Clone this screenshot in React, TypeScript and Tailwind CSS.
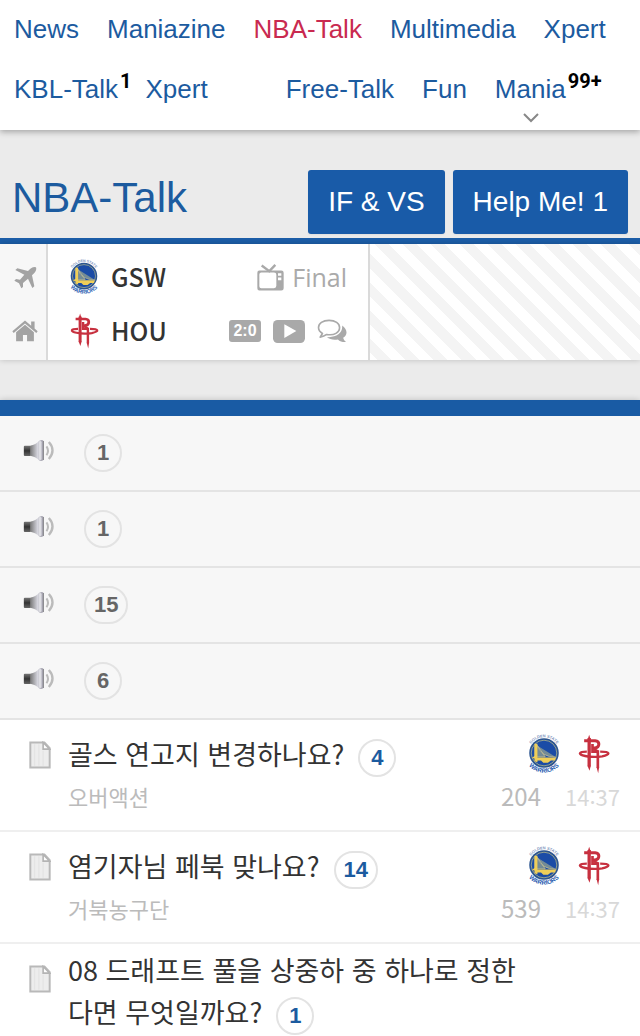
import type { ReactNode } from "react";

interface NavItem {
  label: string;
  active?: boolean;
  count?: string;
  className?: string;
}

interface Post {
  title: string;
  comments: number;
  author?: string;
  views?: number;
  time?: string;
}

const topNav: NavItem[] = [
  { label: "News" },
  { label: "Maniazine" },
  { label: "NBA-Talk", active: true },
  { label: "Multimedia" },
  { label: "Xpert" },
];

const subNav: NavItem[] = [
  { label: "KBL-Talk", count: "1", className: "mr-3.5" },
  { label: "Xpert", className: "mr-[78px]" },
  { label: "Free-Talk", className: "mr-7" },
  { label: "Fun", className: "mr-7" },
  { label: "Mania", count: "99+" },
];

const notices = [1, 1, 15, 6];

const posts: Post[] = [
  { title: "골스 연고지 변경하나요?", comments: 4, author: "오버액션", views: 204, time: "14:37" },
  { title: "염기자님 페북 맞나요?", comments: 14, author: "거북농구단", views: 539, time: "14:37" },
  { title: "08 드래프트 풀을 상중하 중 하나로 정한다면 무엇일까요?", comments: 1 },
];

const PlaneIcon = () => (
  <svg viewBox="42 90 69 69" className="h-[23px] w-[23px] fill-[#a3a3a3]" aria-hidden="true">
    <path d="M108 94Q100 90 91 98L84 105L52 97L46 102L73 116L60 131L48 129L43 134L57 142L64 157L69 153L69 141L84 128L97 156L103 151L96 118L103 111Q111 102 108 94Z" />
  </svg>
);

const HomeIcon = () => (
  <svg viewBox="37 259 76 64" className="h-[22px] w-[26px] fill-[#a3a3a3]" aria-hidden="true">
    <path d="M75 260L38 292L42 297L75 269L108 297L112 292L103 284V263H93V276Z" />
    <path d="M75 273L49 295V321H69V303H81V321H101V295Z" />
  </svg>
);

const TvIcon = () => (
  <svg viewBox="167 86 81 80" className="h-[27px] w-[27px] fill-[#a9a9a9]" aria-hidden="true">
    <path
      fillRule="evenodd"
      d="M174 105H240Q247 105 247 112V158Q247 165 240 165H174Q168 165 168 158V112Q168 105 174 105ZM180 111Q174 111 174 117V152Q174 158 180 158H218Q225 158 225 151V118Q225 111 218 111ZM230 113V121H240V113ZM230 126V134H240V126Z"
    />
    <path d="M181 90L204 107L222 88" fill="none" stroke="#a9a9a9" strokeWidth="7" />
  </svg>
);

const PlayIcon = () => (
  <svg viewBox="222 258 96 69" className="h-[23px] w-8" aria-hidden="true">
    <rect x="222" y="258" width="96" height="69" rx="14" fill="#a9a9a9" />
    <path d="M256 271V312L292 291Z" fill="#fff" />
  </svg>
);

const ChatIcon = () => (
  <svg viewBox="352 250 90 73" className="h-6 w-[30px]" aria-hidden="true">
    <path
      d="M388 254C369 254 356 263 356 276C356 284 361 290 368 294L361 305C369 304 376 301 381 297C404 301 420 291 420 276C420 263 407 254 388 254Z"
      fill="none"
      stroke="#a9a9a9"
      strokeWidth="5"
      strokeLinejoin="round"
    />
    <path
      d="M428 270C446 283 444 300 431 307C432 313 436 317 440 320C430 321 421 318 415 312C403 315 389 312 382 305C409 307 430 294 428 270Z"
      fill="#a9a9a9"
    />
  </svg>
);

const SpeakerIcon = () => (
  <svg viewBox="70 148 98 72" className="mb-1 h-6 w-[33px] shrink-0" aria-hidden="true">
    <defs>
      <linearGradient id="horn" x1="0" x2="1" y1="0" y2="0">
        <stop offset="0" stopColor="#777" />
        <stop offset="0.55" stopColor="#d4d4dc" />
        <stop offset="1" stopColor="#9a98a5" />
      </linearGradient>
      <linearGradient id="magnet" x1="0" x2="0" y1="0" y2="1">
        <stop offset="0" stopColor="#777" />
        <stop offset="0.5" stopColor="#333" />
        <stop offset="1" stopColor="#666" />
      </linearGradient>
    </defs>
    <rect x="72" y="168" width="21" height="31" rx="3" fill="url(#magnet)" />
    <path d="M91 168Q108 165 118 153Q128 148 131 155V209Q129 217 119 213Q109 201 91 198Z" fill="url(#horn)" />
    <path d="M121 158V207" stroke="#dedee3" strokeWidth="8" strokeLinecap="round" />
    <path d="M131 155V210" stroke="#8d8d91" strokeWidth="3" strokeLinecap="round" />
    <path d="M140 170Q149 183 140 197" fill="none" stroke="#bbb" strokeWidth="6" />
    <path d="M147 157Q169 182 147 208" fill="none" stroke="#bbb" strokeWidth="7" />
  </svg>
);

const DocIcon = () => (
  <svg viewBox="87 63 67 84" className="h-7 w-[22px] shrink-0" aria-hidden="true">
    <path d="M91 67H134L150 84V143H91Z" fill="#ededed" stroke="#b9b9b9" strokeWidth="6" />
    <path d="M104 72V138M117 72V138M130 92V138" stroke="#e4e4e4" strokeWidth="4" />
    <path d="M130 67V87H150Z" fill="#fff" stroke="#b4b4b4" strokeWidth="5" />
  </svg>
);

const WarriorsLogo = ({ className }: { className: string }) => (
  <svg viewBox="87 54 96 122" className={`overflow-visible ${className}`} role="img" aria-label="Golden State Warriors">
    <defs>
      <path id="arcTop" d="M88 110A47 46 0 0 1 182 110" />
      <path id="arcBottom" d="M75 112A60 60 0 0 0 195 112" />
    </defs>
    <text fontSize="12" fontWeight="700" fill="#7e94bd" fontFamily="Liberation Sans, sans-serif">
      <textPath href="#arcTop" startOffset="50%" textAnchor="middle">GOLDEN STATE</textPath>
    </text>
    <circle cx="135" cy="112" r="45" fill="#2c5590" />
    <circle cx="135" cy="112" r="39" fill="#1b4ca6" stroke="#a9b18c" strokeWidth="2.5" />
    <path d="M107 89L114 88L139 124H107ZM114 89Q127 125 172 125" fill="#748b96" stroke="#d5cb91" strokeWidth="2" />
    <path d="M106 84H115V126H171L169 135H156L147 142H133L126 135H115V140L106 137V129L98 127L106 121Z" fill="#efce58" />
    <text fontSize="19" fontWeight="700" fill="#285baf" fontFamily="Liberation Sans, sans-serif">
      <textPath href="#arcBottom" startOffset="50%" textAnchor="middle">WARRIORS</textPath>
    </text>
  </svg>
);

const RocketsLogo = ({ className }: { className: string }) => (
  <svg viewBox="235 54 98 120" className={className} role="img" aria-label="Houston Rockets">
    <g fill="none" stroke="#c7303f">
      <path d="M259 120C235 115 240 107 264 107M304 107C334 107 337 115 310 121Q283 125 259 120" strokeWidth="7" />
      <path d="M256 74H289Q300 75 300 84Q300 95 287 96H280M284 96L298 109" strokeWidth="9" />
      <path d="M281 84V107H297V155" strokeWidth="8" />
      <path d="M271 66V151" strokeWidth="10" />
    </g>
    <path d="M266 72L271 56L276 72ZM266 149H276L272 164ZM293 153H301L298 172Z" fill="#c7303f" />
  </svg>
);

const NavLink = ({ item }: { item: NavItem }) => (
  <a
    href="#"
    className={`relative flex h-[60px] items-center pb-0.5 ${item.active ? "text-[#c92a50]" : "text-[#1c5b9f]"} ${item.className ?? ""}`}
  >
    {item.label}
    {item.count && (
      <sup className="top-0 mb-4 ml-0.5 font-['Roboto',sans-serif] text-xl leading-5 font-bold text-black">{item.count}</sup>
    )}
    {item.label === "Mania" && (
      <svg viewBox="0 0 16 10" className="absolute top-[53px] left-7 h-2.5 w-4" aria-hidden="true">
        <path d="M1 1L8 8L15 1" fill="none" stroke="#888" strokeWidth="2" />
      </svg>
    )}
  </a>
);

const Badge = ({ children, blue }: { children: ReactNode; blue?: boolean }) => (
  <span
    className={`inline-flex h-[38px] min-w-[38px] items-center justify-center rounded-full border-2 border-[#e3e3e3] px-2 font-['Liberation_Sans',sans-serif] text-[22px] leading-6 font-bold ${blue ? "bg-white text-[#1c5b9f]" : "text-[#666]"}`}
  >
    {children}
  </span>
);

const ScoreBoard = () => (
  <section className="flex h-[116px] bg-white shadow-[0_0_6px_rgba(0,0,0,0.2)]">
    <div className="flex w-12 flex-col items-center border-r-2 border-[#dadada] bg-[#f7f7f7] pt-1.5">
      <div className="flex h-[54px] items-center pl-1"><PlaneIcon /></div>
      <div className="flex h-[54px] items-center pl-1"><HomeIcon /></div>
    </div>
    <div className="flex w-[322px] flex-col border-r-2 border-[#dadada] px-[21px] pt-1.5">
      <div className="flex h-[54px] items-center">
        <WarriorsLogo className="h-9 w-[30px]" />
        <span className="ml-3 pb-0.5 text-[25px] leading-8 font-medium text-[#333]">GSW</span>
        <div className="ml-auto flex items-center gap-2 font-['Open_Sans',sans-serif] text-[25px] leading-8 text-[#aaa]">
          <TvIcon />
          Final
        </div>
      </div>
      <div className="flex h-[54px] items-center">
        <RocketsLogo className="h-9 w-[30px]" />
        <span className="ml-3 pb-0.5 text-[25px] leading-8 font-medium text-[#333]">HOU</span>
        <div className="ml-auto flex items-center gap-3">
          <span className="flex h-[22px] w-8 items-center justify-center rounded-[3px] bg-[#a9a9a9] font-['Liberation_Sans',sans-serif] text-base leading-5 font-bold text-white">
            2:0
          </span>
          <PlayIcon />
          <ChatIcon />
        </div>
      </div>
    </div>
    <div className="flex-1 bg-[repeating-linear-gradient(45deg,#fff_0px,#fff_5px,#f4f4f4_5px,#f4f4f4_15px,#fff_15px,#fff_20px)]" />
  </section>
);

const PostRow = ({ post }: { post: Post }) => (
  <li className="flex border-b-2 border-[#efefef] bg-white pr-5 pl-[29px] last:border-b-0">
    <div className="flex h-[70px] items-center"><DocIcon /></div>
    <div className={`ml-[17px] flex-1 ${post.author ? "h-[110px] pt-[13px]" : "pt-[5px] pr-[90px]"}`}>
      <a href="#" className="text-[27px] leading-[42px] text-[#333]">
        {post.title}
        <span className="ml-3.5 inline-flex align-middle leading-none">
          <Badge blue>{post.comments}</Badge>
        </span>
      </a>
      {post.author && <p className="text-[22px] leading-[38px] text-[#bbb]">{post.author}</p>}
    </div>
    {post.author && (
      <div className="flex flex-col items-end pt-[13px]">
        <div className="mr-2.5 flex h-[42px] items-center gap-4">
          <WarriorsLogo className="h-10 w-[34px]" />
          <RocketsLogo className="h-10 w-[33px]" />
        </div>
        <div className="flex items-baseline gap-6 leading-[42px]">
          <span className="text-2xl text-[#bbb]">{post.views}</span>
          <span className="text-[22px] text-[#d8d8d8]">{post.time}</span>
        </div>
      </div>
    )}
  </li>
);

export default function App() {
  return (
    <div lang="ko" className="bg-[#ebebeb] font-['Noto_Sans_CJK_KR',sans-serif]">
      <nav className="relative bg-white px-3.5 pb-2.5 font-['Liberation_Sans',sans-serif] text-[26px] leading-[30px] shadow-[0_2px_6px_rgba(0,0,0,0.3)]">
        <div className="flex gap-7">
          {topNav.map((item) => <NavLink key={item.label} item={item} />)}
        </div>
        <div className="flex">
          {subNav.map((item) => <NavLink key={item.label} item={item} />)}
        </div>
      </nav>

      <header className="flex h-[108px] items-end px-3 pb-1 font-['Liberation_Sans',sans-serif]">
        <h1 className="mb-3 text-[42px] leading-[48px] text-[#1c5b9f]">NBA-Talk</h1>
        <div className="ml-auto flex gap-2">
          <button className="h-16 rounded-[3px] bg-[#195ba8] px-5 text-[28px] text-white shadow-xs">IF &amp; VS</button>
          <button className="h-16 rounded-[3px] bg-[#195ba8] px-5 text-[28px] text-white shadow-xs">Help Me! 1</button>
        </div>
      </header>

      <div className="h-1.5 bg-[#1c5ea8]" />
      <ScoreBoard />
      <div className="h-10" />
      <div className="h-4 bg-[#195ba4] shadow-[0_0_6px_rgba(0,0,0,0.2)]" />

      <ul>
        {notices.map((count, i) => (
          <li key={i} className="flex h-[76px] items-center gap-7 border-b-2 border-[#e4e4e4] bg-[#f7f7f7] pl-[23px]">
            <SpeakerIcon />
            <Badge>{count}</Badge>
          </li>
        ))}
      </ul>
      <ul>
        {posts.map((post) => <PostRow key={post.title} post={post} />)}
      </ul>
    </div>
  );
}
